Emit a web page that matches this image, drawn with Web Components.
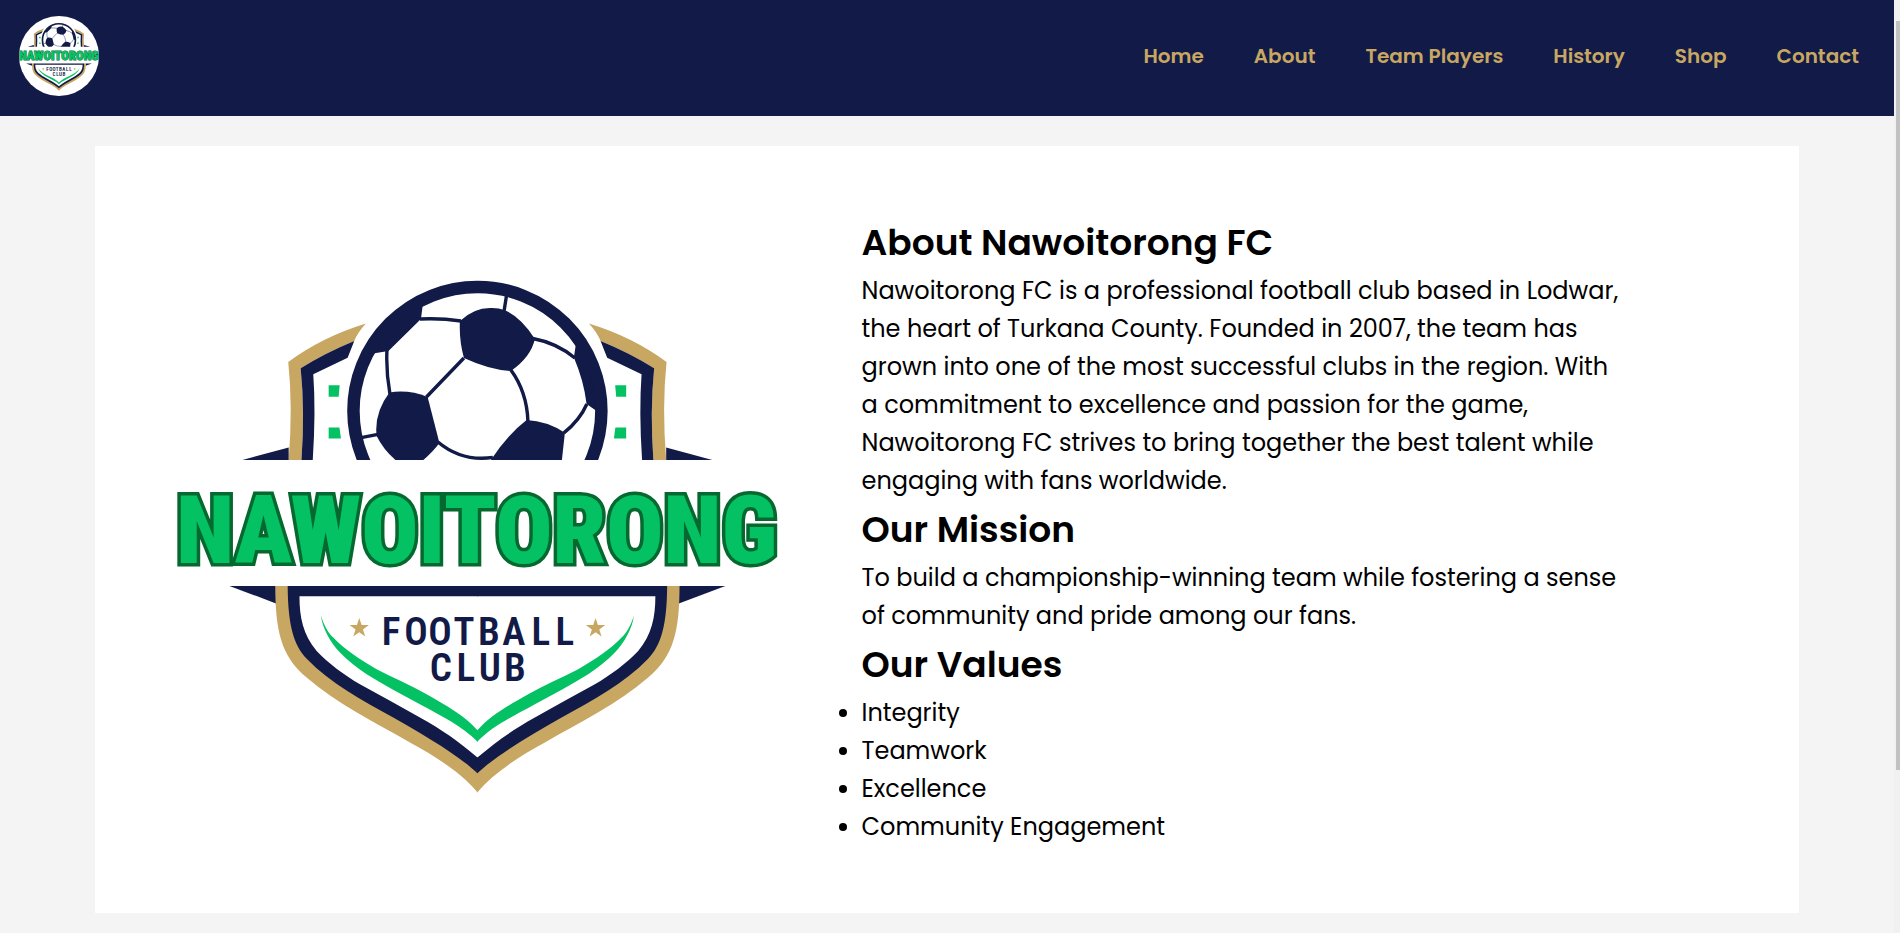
<!DOCTYPE html>
<html lang="en">
<head>
<meta charset="utf-8">
<title>About | Nawoitorong FC</title>
<style>
  :root { --navy: #121a47; --gold: #c7a762; --page: #f4f4f4; }
  * { box-sizing: border-box; }
  body {
    margin: 0;
    display: grid;
    grid-template-columns: minmax(0, 1fr) 6px;
    min-height: 100vh;
    background: var(--page);
    color: #000;
    font-family: Poppins, Inter, "Open Sans", sans-serif;
  }
</style>
</head>
<body>
<club-page></club-page>
<scroll-rail></scroll-rail>

<template id="crest-template">
  <style>
    :host { display: block; }
    svg { display: block; width: 100%; height: auto; overflow: visible; }
    .navy { fill: #121a47; }
    .gold { fill: #c7a762; }
    .green { fill: #04c164; }
    .seam { fill: none; stroke: #121a47; stroke-width: 3.4; }
    .name { font: 900 95px "Roboto Condensed", Roboto, sans-serif; fill: #04c164; stroke: #04682f; stroke-width: 7; paint-order: stroke; }
    .club { font: 600 39px "Roboto Condensed", Roboto, sans-serif; fill: #121a47; }
    text { text-anchor: middle; }
  </style>
  <svg viewBox="177 228 602 602" role="img" aria-label="Nawoitorong Football Club crest">
    <defs>
      <clipPath id="top"><rect x="177" y="228" width="602" height="231"/></clipPath>
      <clipPath id="disc"><circle cx="477.500" cy="410" r="124"/></clipPath>
      <g id="half">
        <path class="gold" d="M366 322.500Q322 336 288.300 361Q293 406 288.700 459H301.500Q305 410 300.700 367.300Q325 352 354.300 340Q358 331 366 322.500Z"/>
        <path class="navy" d="M354.300 340Q325 352 300.700 367.300Q305 410 301.500 459H312.800Q316 410 313.300 373.300L347.700 356.700Z"/>
        <path class="navy" d="M242.500 459L288.700 446.500V459Z"/>
        <path class="green" d="M328.700 384.300H339.700L338.700 395.700H328.700ZM328.700 426.500H339.500L341 437.500H328.700Z"/>
        <path class="navy" d="M229.500 585H276V602.500Z"/>
        <path class="gold" d="M275.300 585C275.500 630 281 655 306.700 676.700C337 703 376 722 410 741.700C438 757 461 772 477.500 791.300H478V766C458 748 422 727 396 712C366 696 336 678 312 655C300 642 294 622 293 585Z"/>
        <path class="navy" d="M287.700 585C288 622 293 644 307 658C330 682 362 699 393.300 716.700C422 733 458 754 477.500 772.300H478V756.700H477.500C458 740 442 729 420 716.700C400 705 379 694 360 683.300C344 674 328 662 316.700 650C303 634 299.500 616 299.500 595.300H478V585Z"/>
        <path class="green" d="M321 614.300C324 625 329 633 333.300 636.700C344 648 360 659 376.700 668.300C393 677 411 684 426.700 693.300C447 705 464 714 477.500 729.300H478V740.700H477.500C462 725 443 716 420 703.300C401 693 384 684 366.700 673.300C357 667 348 660 340 651.700C331 642 322 627 321 614.300Z"/>
        <path class="gold" d="M359.300 617L361.700 624H369L363 628.500L365.300 635.700L359.300 631.300L353.300 635.700L355.600 628.500L349.600 624H357Z"/>
      </g>
    </defs>
    <use href="#half"/>
    <use href="#half" transform="translate(955) scale(-1 1)"/>
    <g clip-path="url(#top)">
      <circle cx="477.500" cy="410" r="124" fill="#fff"/>
      <g clip-path="url(#disc)">
        <path class="navy" d="M422.700 305L421 318L388.500 350L373 352.500L350 370L360 320L410 280Z"/>
        <path class="navy" d="M460 320Q474 307 490 307Q498 306.500 505 309.300Q521 316 535 338Q531 356 511 370Q490 369 464 357Q459 339 460 320Z"/>
        <path class="navy" d="M576 343L574 356.500Q584 380 586.700 403L596 409.500L615 410L590 330Z"/>
        <path class="navy" d="M526.700 419Q547 420 565 431.700L561.700 462H489Q507 434 526.700 419Z"/>
        <path class="navy" d="M389.500 391.500Q409 388.500 427.700 396L439.500 442Q433 451 420 462H399Q384 450 376.700 435Q374 412 389.500 391.500Z"/>
        <path class="seam" d="M420 318Q441 317 461 320M504 311L507 292M533 337.500Q557 342 575 357M587 403Q580 419 564 432M511 369Q527 391 528 420M464 357L426.500 396M387 349Q386 371 390 393M360 437L378 433.500M438 441Q462 461 493 456.500"/>
      </g>
      <circle cx="477.500" cy="410" r="124" fill="none" stroke="#121a47" stroke-width="12.500"/>
    </g>
    <text class="name" x="477" y="562">NAWOITORONG</text>
    <text class="club" x="391 416 440 464 489 514 541 565" y="644">FOOTBALL</text>
    <text class="club" x="441 466 490 515" y="680">CLUB</text>
  </svg>
</template>

<template id="header-template">
  <style>
    :host {
      display: flex; align-items: center; justify-content: space-between;
      padding: 16px 35px 20px 19px; background: var(--navy);
    }
    club-crest { width: 80px; height: 80px; border-radius: 50%; overflow: hidden; background: #fff; }
    nav { display: flex; gap: 50px; }
  </style>
  <club-crest></club-crest>
  <nav aria-label="Main"><slot></slot></nav>
</template>

<template id="link-template">
  <style>
    :host { display: block; }
    a { color: var(--gold); font-size: 20px; line-height: 32px; font-weight: 600; text-decoration: none; white-space: nowrap; }
  </style>
  <a><slot></slot></a>
</template>

<template id="about-template">
  <style>
    :host {
      display: grid; grid-template-columns: minmax(0, 602fr) minmax(0, 766fr);
      column-gap: 83px; align-items: center;
      margin: 30px 5% 20px; padding: 67px 172px 67px 82px; background: #fff;
    }
  </style>
  <club-crest></club-crest>
  <div><slot></slot></div>
</template>

<template id="section-template">
  <style>
    :host { display: block; font-size: 24px; line-height: 38px; }
    h2 { margin: 0; font-size: 36px; line-height: 59px; font-weight: 600; }
    ::slotted(p), ::slotted(ul) { margin: 0; padding: 0; }
  </style>
  <section><h2></h2><slot></slot></section>
</template>

<template id="rail-template">
  <style>
    :host { display: block; position: sticky; top: 0; height: 100vh; background: #f1f1f1; }
    div { height: 100%; display: grid; grid-template-rows: 21fr 749fr 163fr; padding-left: 2px; }
    i { grid-row: 2; background: #c1c1c1; }
  </style>
  <div><i></i></div>
</template>

<template id="page-template">
  <style>:host { display: block; }</style>
  <club-header>
    <club-link href="#home">Home</club-link>
    <club-link href="#about">About</club-link>
    <club-link href="#players">Team Players</club-link>
    <club-link href="#history">History</club-link>
    <club-link href="#shop">Shop</club-link>
    <club-link href="#contact">Contact</club-link>
  </club-header>
  <main>
    <about-card>
      <about-section heading="About Nawoitorong FC">
        <p>Nawoitorong FC is a professional football club based in Lodwar, the heart of Turkana County. Founded in 2007, the team has grown into one of the most successful clubs in the region. With a commitment to excellence and passion for the game, Nawoitorong FC strives to bring together the best talent while engaging with fans worldwide.</p>
      </about-section>
      <about-section heading="Our Mission">
        <p>To build a championship-winning team while fostering a sense of community and pride among our fans.</p>
      </about-section>
      <about-section heading="Our Values">
        <ul>
          <li>Integrity</li>
          <li>Teamwork</li>
          <li>Excellence</li>
          <li>Community Engagement</li>
        </ul>
      </about-section>
    </about-card>
  </main>
</template>

<script>
  class TemplateElement extends HTMLElement {
    constructor() {
      super();
      const template = document.getElementById(this.constructor.template);
      this.attachShadow({ mode: 'open' }).append(template.content.cloneNode(true));
    }
  }
  const define = (name, template, base = TemplateElement) =>
    customElements.define(name, class extends base { static template = template; });

  class LinkElement extends TemplateElement {
    connectedCallback() { this.shadowRoot.querySelector('a').href = this.getAttribute('href'); }
  }
  class SectionElement extends TemplateElement {
    connectedCallback() { this.shadowRoot.querySelector('h2').textContent = this.getAttribute('heading'); }
  }

  define('club-crest', 'crest-template');
  define('club-link', 'link-template', LinkElement);
  define('club-header', 'header-template');
  define('about-section', 'section-template', SectionElement);
  define('about-card', 'about-template');
  define('scroll-rail', 'rail-template');
  define('club-page', 'page-template');
</script>
</body>
</html>
